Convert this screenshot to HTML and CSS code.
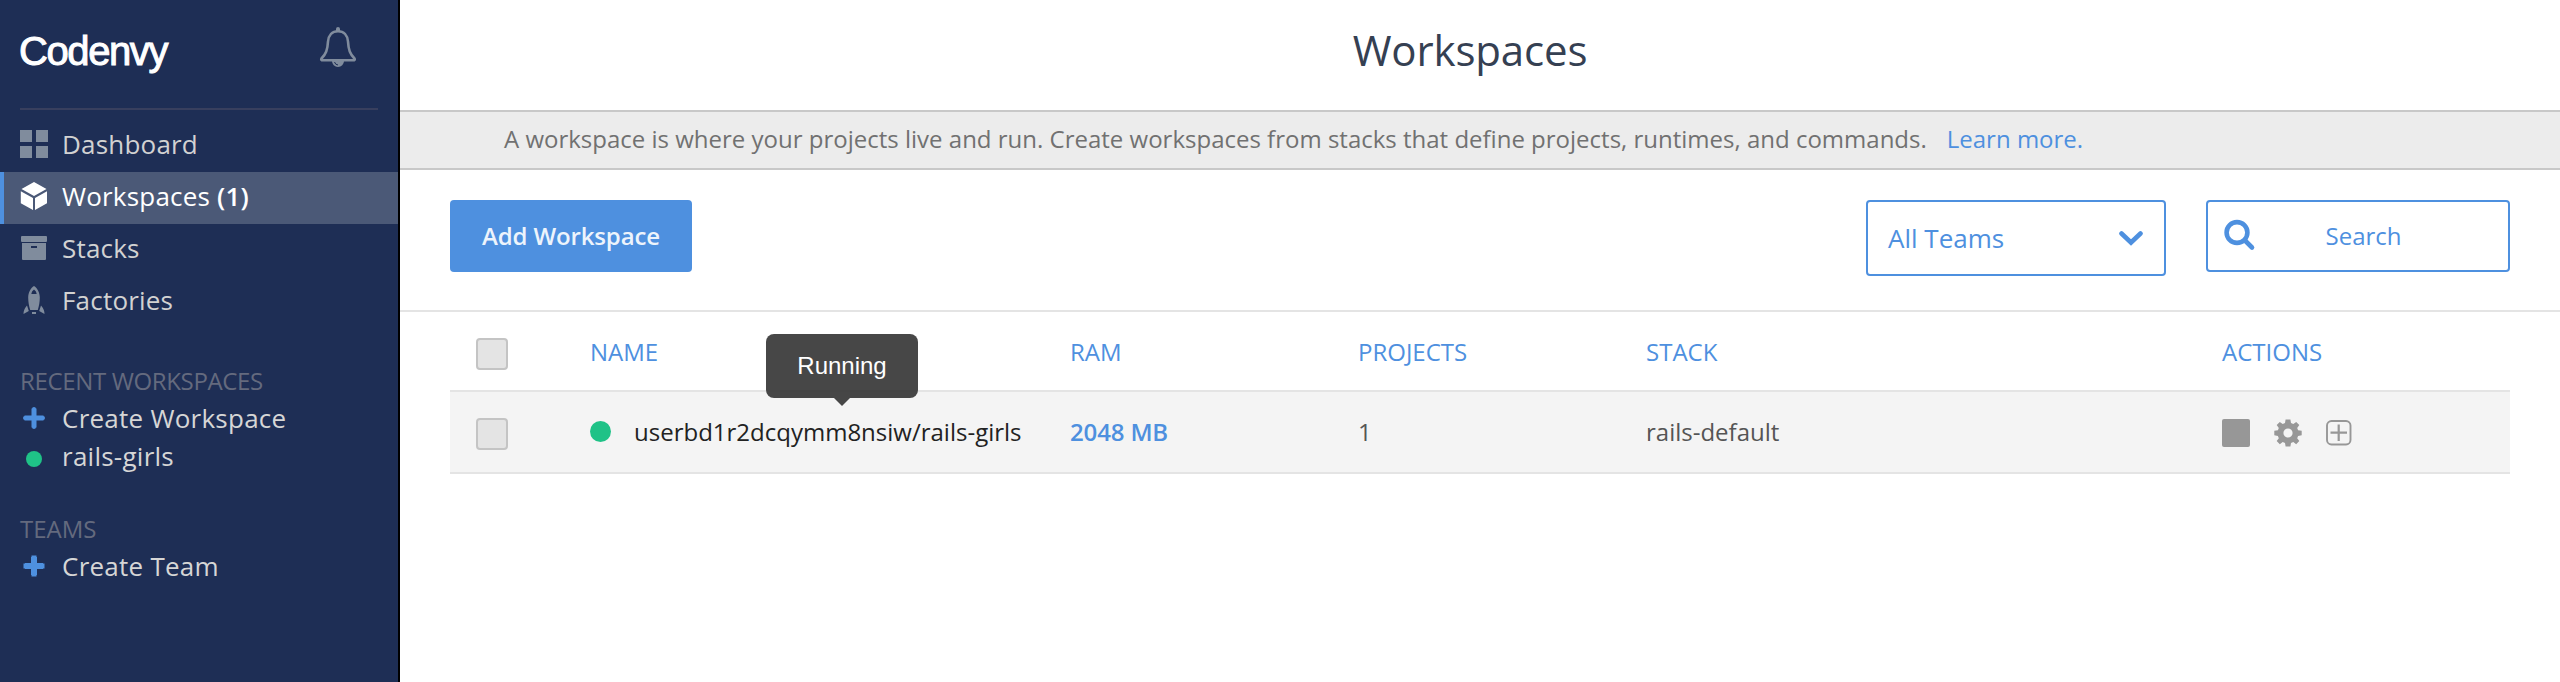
FILE: index.html
```html
<!DOCTYPE html>
<html lang="en">
<head>
<meta charset="utf-8">
<title>Workspaces</title>
<link rel="stylesheet" href="styles.css">
</head>
<body>
<div class="app">
  <aside class="sidebar">
    <div class="brand">
      <span class="logo">Codenvy</span>
      <svg class="bell" width="38" height="42" viewBox="0 0 38 42">
        <path d="M19 4.200C13 4.200 9.500 8.500 9 14.500 8.500 23 7 27 2.500 31.500Q1.500 33.300 4 33.300H34Q36.500 33.300 35.500 31.500C31 27 29.500 23 29 14.500 28.500 8.500 25 4.200 19 4.200Z" fill="none" stroke="#808c9d" stroke-width="2.600"/>
        <path d="M17 4V2a2 2 0 0 1 4 0V4ZM13 34H25A6 6 0 0 1 13 34Z" fill="#808c9d"/>
        <path d="M15.500 35a4 4 0 0 0 3.500 3" fill="none" stroke="#1e2e55" stroke-width="1"/>
      </svg>
    </div>
    <nav class="nav">
      <a class="nav-item">
        <svg width="28" height="28" viewBox="0 0 28 28" fill="#808c9d"><path d="M0 0h12v12H0zM16 0h12v12H16zM0 16h12v12H0zM16 16h12v12H16z"/></svg>
        <span>Dashboard</span>
      </a>
      <a class="nav-item active">
        <svg width="28" height="28" viewBox="0 0 28 28" fill="#fff"><path d="M14 0 26.500 7 14 14 1.500 7ZM.8 9.300 13 16V28L.8 21.200ZM27 9.300 15 16V28L27 21.200Z"/></svg>
        <span>Workspaces <b>(1)</b></span>
      </a>
      <a class="nav-item">
        <svg width="28" height="28" viewBox="0 0 28 28" fill="#808c9d"><path fill-rule="evenodd" d="M2 2H26a1 1 0 0 1 1 1V7a1 1 0 0 1-1 1H2A1 1 0 0 1 1 7V3A1 1 0 0 1 2 2ZM2 9H26V25a1 1 0 0 1-1 1H3a1 1 0 0 1-1-1ZM11 12v2h6v-2Z"/></svg>
        <span>Stacks</span>
      </a>
      <a class="nav-item">
        <svg width="28" height="28" viewBox="0 0 28 28" fill="#808c9d"><path fill-rule="evenodd" d="M14 0C17 2 19.800 6 19.800 11.500 19.800 16 19 20 17.800 24H10.200C9 20 8.200 16 8.200 11.500 8.200 6 11 2 14 0ZM14 3.500Q11.500 5 11.300 8H16.700Q16.500 5 14 3.500ZM12 26H16V28H12ZM7 19.500 8.800 25 3.500 28Q3.500 23.500 7 19.500ZM21 19.500 19.200 25 24.500 28Q24.500 23.500 21 19.500Z"/></svg>
        <span>Factories</span>
      </a>
    </nav>
    <section class="group">
      <h2 class="group-title recent">RECENT WORKSPACES</h2>
      <a class="group-item">
        <svg width="28" height="22" viewBox="0 0 28 22"><path d="M14 1.500V20.500M4.500 11H23.500" stroke="#4e90df" stroke-width="5"/><path d="M14 2V20M5 11H23" stroke="#4e90df" stroke-width="4" stroke-linecap="round"/></svg>
        <span>Create Workspace</span>
      </a>
      <a class="group-item">
        <i class="dot-cell"><i class="dot"></i></i>
        <span>rails-girls</span>
      </a>
    </section>
    <section class="group">
      <h2 class="group-title">TEAMS</h2>
      <a class="group-item">
        <svg width="28" height="22" viewBox="0 0 28 22"><path d="M14 .5V21.500M3.500 11H24.500" stroke="#4e90df" stroke-width="5"/><path d="M14 2V20M5 11H23" stroke="#4e90df" stroke-width="6" stroke-linecap="butt"/></svg>
        <span>Create Team</span>
      </a>
    </section>
  </aside>

  <main class="main">
    <h1 class="title">Workspaces</h1>
    <div class="info">
      <span class="info-text">A workspace is where your projects live and run. Create workspaces from stacks that define projects, runtimes, and commands.</span>
      <a class="info-link">Learn more.</a>
    </div>
    <div class="toolbar">
      <button class="add">Add Workspace</button>
      <div class="filters">
        <div class="select">
          <span>All Teams</span>
          <svg width="24" height="16" viewBox="0 0 24 16"><path d="M2.500 3.500 12 12.500 21.500 3.500" fill="none" stroke="#4e90df" stroke-width="4.600" stroke-linecap="round"/></svg>
        </div>
        <div class="search">
          <svg width="32" height="32" viewBox="0 0 32 32" fill="none" stroke="#4e90df"><circle cx="13" cy="13.500" r="10.400" stroke-width="4.600"/><path d="M21 21.500 28 28.500" stroke-width="4.600" stroke-linecap="round"/></svg>
          <span class="search-text">Search</span>
        </div>
      </div>
    </div>
    <div class="table">
      <div class="row head">
        <i class="checkbox"></i>
        <span>NAME</span><span>RAM</span><span>PROJECTS</span><span>STACK</span><span>ACTIONS</span>
      </div>
      <div class="row body">
        <i class="checkbox"></i>
        <div class="name">
          <i class="status"></i>
          <span class="ws-name">userbd1r2dcqymm8nsiw/rails-girls</span>
          <div class="tooltip">Running</div>
        </div>
        <span class="ram">2048 MB</span>
        <span>1</span>
        <span>rails-default</span>
        <div class="actions">
          <i class="stop"></i>
          <svg class="gear" width="28" height="28" viewBox="0 0 28 28"><path fill="#979797" fill-rule="evenodd" d="M11.600 0.500H16.400L17 4.100 19.300 5 22.200 2.900 25.300 6 23.200 8.900 24.100 11.200 27.700 11.800V16.200L24.100 16.900 23.200 19.200 25.300 22.100 22.200 25.200 19.300 23.100 17 24 16.400 27.500H11.600L11 24 8.700 23.100 5.800 25.200 2.700 22.100 4.800 19.200 3.900 16.900.3 16.200V11.800L3.900 11.200 4.800 8.900 2.700 6 5.800 2.900 8.700 5 11 4.100ZM14 9.400A4.600 4.600 0 1 0 14 18.600 4.600 4.600 0 1 0 14 9.400Z"/></svg>
          <svg class="more" width="26" height="26" viewBox="0 0 26 26" fill="none" stroke="#979797"><rect x="1" y="1" width="23.500" height="23.500" rx="4.500" stroke-width="1.900"/><path d="M12.700 4.500V21M4.500 12.700H21" stroke-width="2.200"/></svg>
        </div>
      </div>
    </div>
  </main>
</div>
</body>
</html>
```
FILE: styles.css
```css
* { box-sizing: border-box; }
body { margin: 0; font-family: "Open Sans", "Noto Sans", sans-serif; font-size: 24px; color: #555; background: #fff; }
h1, h2 { margin: 0; font-weight: 400; }
i { font-style: normal; display: block; }
svg { display: block; flex: none; }
.app { display: flex; height: 682px; overflow: hidden; }

.sidebar { width: 400px; flex: none; background: #1e2e55; border-right: 2px solid #000; }
.brand { height: 110px; margin: 0 20px; border-bottom: 2px solid #383f5e; display: flex; justify-content: space-between; padding: 0 21px 0 0; }
.logo { font: 40px/46px "Liberation Sans", Arial, sans-serif; color: #fff; letter-spacing: -1.400px; -webkit-text-stroke: 1px #fff; padding-top: 28px; margin-left: -1px; }
.bell { margin-top: 27px; }
.nav { padding-top: 10px; }
.nav-item { height: 52px; display: flex; align-items: center; gap: 14px; padding: 0 20px 4px; font-size: 26px; letter-spacing: 0.200px; color: #d2d2d2; }
.nav-item.active { background: #4b5977; color: #fff; border-left: 4px solid #4e90df; padding-left: 16px; }
.nav-item b { font-weight: 600; }
.group { padding: 34px 20px 0; }
.group-title { height: 37px; line-height: 37px; font-size: 24px; color: #646a7e; }
.group-title.recent { letter-spacing: -0.350px; }
.group + .group { padding-top: 35px; }
.group-item { height: 38px; display: flex; align-items: center; gap: 14px; font-size: 26px; letter-spacing: 0.250px; color: #d6d6d6; }
.dot-cell { width: 28px; padding: 6px 6px 0; }
.dot { width: 16px; height: 16px; border-radius: 50%; background: #1fc287; }

.main { flex: 1; min-width: 0; }
.title { height: 110px; line-height: 100px; padding-right: 20px; text-align: center; font-size: 42px; letter-spacing: -0.150px; color: #354052; }
.info { height: 60px; border: solid #c8c8c8; border-width: 2px 0; background: #ececec; line-height: 54px; padding-left: 104px; display: flex; gap: 20px; color: #717171; }
.info-link { color: #4e90df; }
.toolbar { height: 142px; border-bottom: 2px solid #e4e4e4; padding: 30px 50px 0; display: flex; justify-content: space-between; align-items: flex-start; }
.add { width: 242px; height: 72px; border: 0; border-radius: 4px; background: #4e90df; color: #edf4fc; font: 600 24px "Open Sans", sans-serif; letter-spacing: -0.150px; padding: 0 0 2px; }
.filters { display: flex; gap: 40px; align-items: flex-start; color: #4e90df; }
.select { width: 300px; height: 76px; border: 2px solid #4e90df; border-radius: 4px; padding: 0 21px 0 20px; display: flex; align-items: center; justify-content: space-between; font-size: 26px; }
.search { width: 304px; height: 72px; border: 2px solid #4e90df; border-radius: 4px; display: flex; align-items: center; padding: 0 16px 2px; }
.search-text { flex: 1; text-align: center; padding-right: 21px; }

.table { margin: 0 50px; }
.row { display: grid; grid-template-columns: 114px 480px 288px 288px 576px 1fr; align-items: center; padding-left: 26px; }
.head { height: 78px; color: #4e90df; }
.body { height: 84px; background: #f4f4f4; border: solid #e4e4e4; border-width: 2px 0; padding-bottom: 2px; }
.checkbox { width: 32px; height: 32px; margin-top: 6px; border: 2px solid #c4c4c4; border-radius: 4px; background: #e4e4e4; }
.name { position: relative; display: flex; align-items: center; gap: 23px; color: #222; }
.status { width: 21px; height: 21px; border-radius: 50%; background: #1fc287; }
.ram { color: #4e90df; font-weight: 600; letter-spacing: -0.150px; }
.actions { display: flex; align-items: center; }
.stop { width: 28px; height: 28px; border-radius: 2px; background: #979797; margin-top: 3px; }
.gear { margin: 3px 24px 0 24px; }
.more { margin-top: 4px; }
.tooltip { position: absolute; left: 176px; bottom: 50px; width: 152px; height: 64px; border-radius: 8px; background: rgba(51, 51, 51, .9); color: #fff; font: 24px/64px "Liberation Sans", Arial, sans-serif; text-align: center; }
.tooltip::after { content: ""; position: absolute; left: 68px; top: 64px; border: 8px solid transparent; border-top-color: rgba(51, 51, 51, .9); border-bottom: 0; }
```
